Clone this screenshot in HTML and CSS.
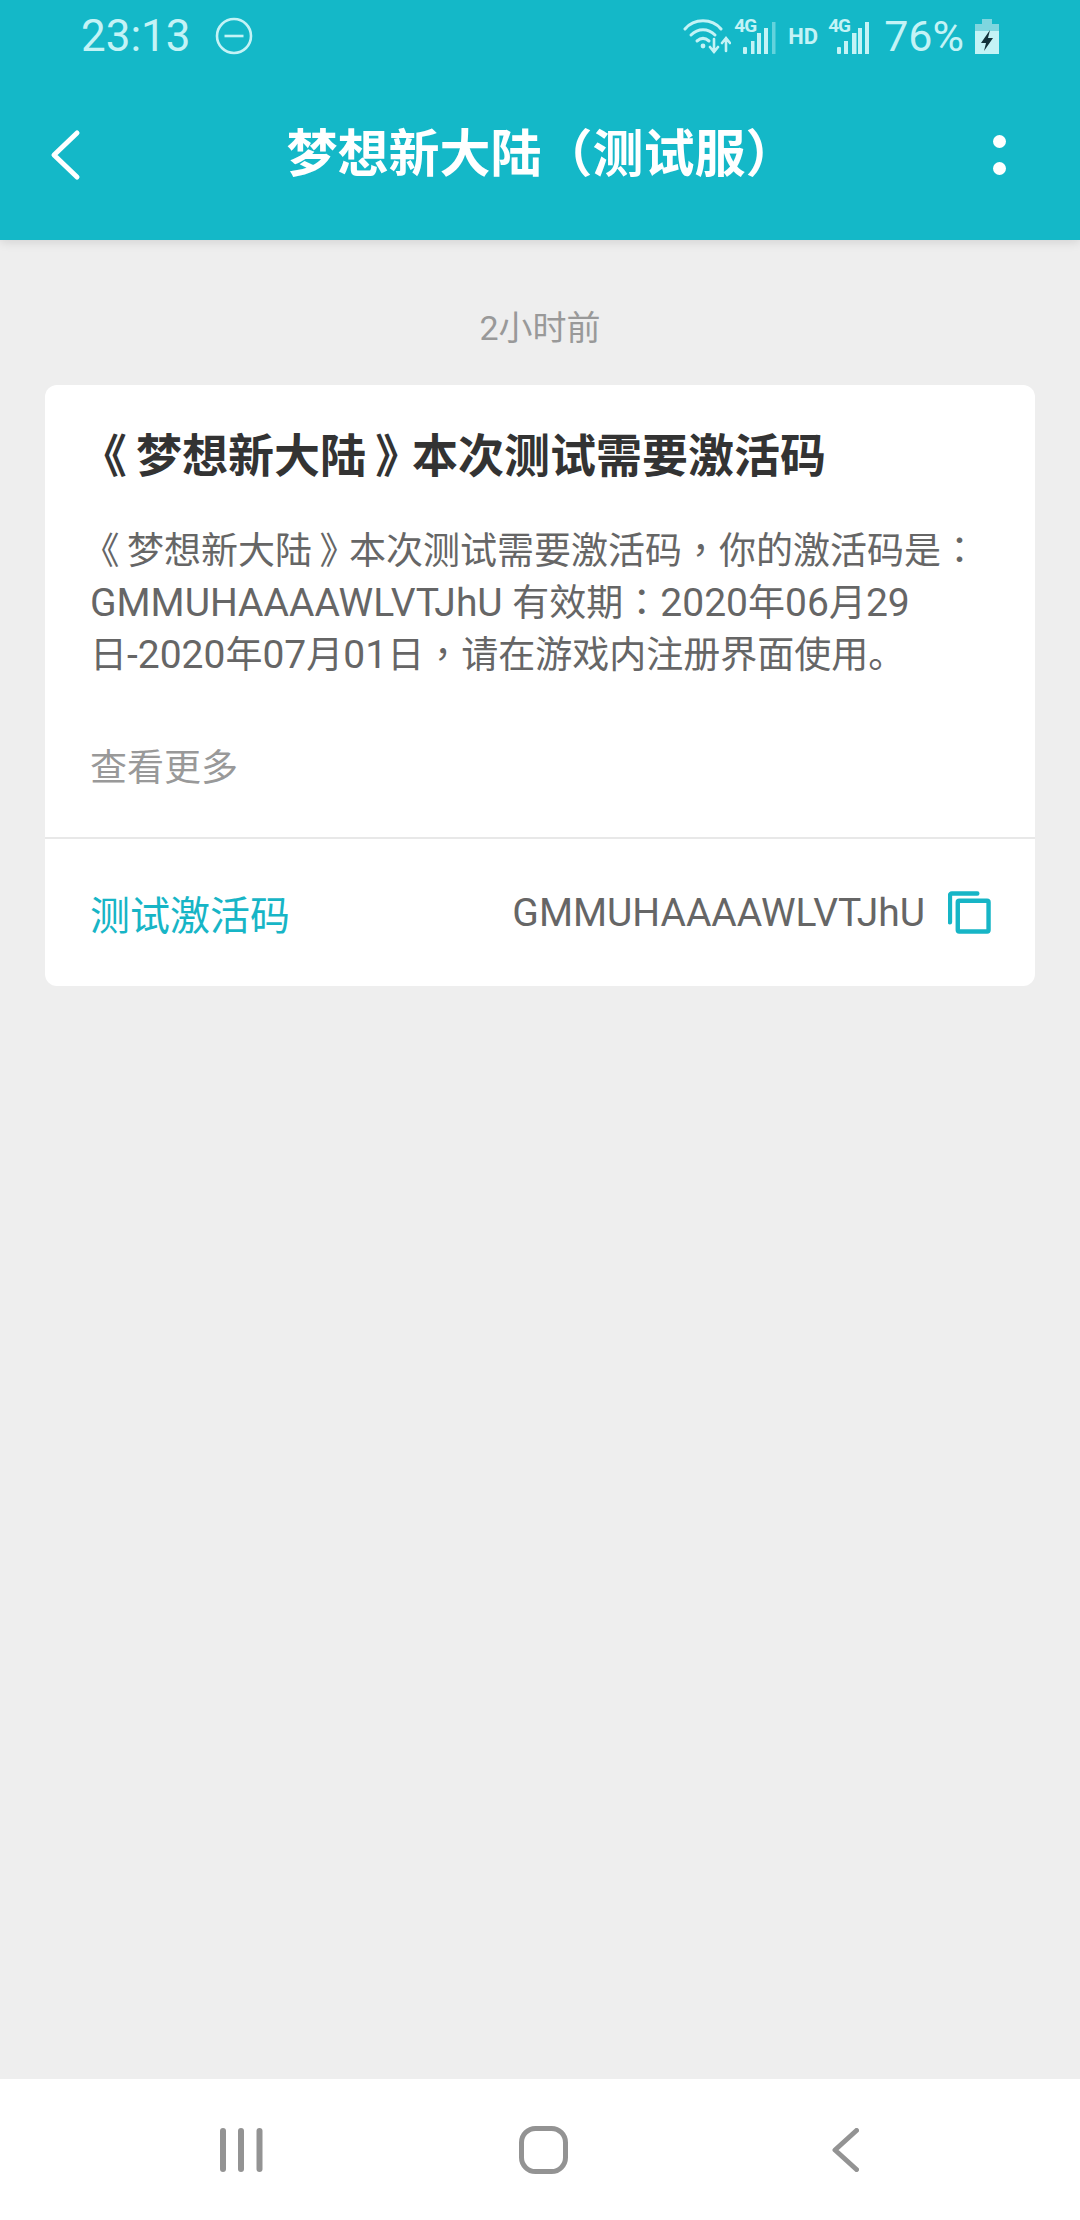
FILE: index.html
```html
<!DOCTYPE html>
<html lang="zh-CN">
<head>
<meta charset="utf-8">
<title>梦想新大陆（测试服）</title>
<link rel="stylesheet" href="styles.css">
</head>
<body>
<div class="screen">
  <header class="top">
    <div class="status">
      <div class="status-left">
        <span class="clock">23:13</span>
        <svg class="dnd" width="38" height="38" viewBox="0 0 38 38"><circle cx="19" cy="19" r="17" fill="none" stroke="#c4f3f6" stroke-width="2.6"/><path d="M9.5 19h19" stroke="#c4f3f6" stroke-width="2.6"/></svg>
      </div>
      <div class="status-right">
        <svg class="wifi" width="48" height="36" viewBox="0 0 48 36" fill="none" stroke="#c4f3f6" stroke-linecap="round"><path d="M2 11C11 0 29 0 38 11" stroke-width="3"/><path d="M8 17c7-7 17-7 24 0" stroke-width="3"/><path d="M14 23c4-3.500 8-3.500 12 0" stroke-width="3"/><circle cx="20" cy="28" r="2.400" fill="#c4f3f6" stroke="none"/><path d="M31 21v13M27 29l4 5 4-5M43 33V20M39 25l4-5 4 5" stroke-width="2.600"/></svg>
        <span class="sim">
          <span class="net">4G</span>
          <svg width="33" height="32" viewBox="0 0 33 32" fill="#c4f3f6"><rect x="0" y="25" width="4" height="7" rx="1"/><rect x="8" y="19" width="3.500" height="13"/><rect x="14" y="11" width="4" height="21"/><rect x="21" y="6" width="4" height="26"/><rect x="29" y="0" width="3.500" height="32" opacity=".45"/></svg>
        </span>
        <span class="hd">HD</span>
        <span class="sim">
          <span class="net">4G</span>
          <svg width="33" height="32" viewBox="0 0 33 32" fill="#c4f3f6"><rect x="0" y="25" width="4" height="7" rx="1"/><rect x="7" y="19" width="4" height="13"/><rect x="15" y="11" width="4.500" height="21"/><rect x="21" y="6" width="4" height="26"/><rect x="28" y="0" width="4" height="32"/></svg>
        </span>
        <span class="pct">76%</span>
        <svg class="batt" width="24" height="35" viewBox="0 0 24 35"><path d="M7 0h10v5h7v30H0V5h7z" fill="#c4f3f6"/><path d="M7 0h10v5h7v7H0V5h7z" fill="#7fd6df"/><path d="M15 11l-9 13h5l-2 8 9-13h-5z" fill="#12323a"/></svg>
      </div>
    </div>
    <div class="titlebar">
      <svg class="back" width="34" height="52" viewBox="0 0 34 52" fill="none"><path d="M29 4L6 26l23 22" stroke="#fff" stroke-width="5" stroke-linecap="round" stroke-linejoin="round"/></svg>
      <h1 class="title">梦想新大陆（测试服）</h1>
      <div class="more"><i class="dot"></i><i class="dot"></i></div>
    </div>
  </header>

  <main class="content">
    <p class="when">2小时前</p>
    <article class="card">
      <div class="card-body">
        <h2 class="card-title"><span class="punct open" lang="zh-TW">《</span>梦想新大陆<span class="punct close" lang="zh-TW">》</span>本次测试需要激活码</h2>
        <p class="card-text"><span class="punct open" lang="zh-TW">《</span>梦想新大陆<span class="punct close" lang="zh-TW">》</span>本次测试需要激活码<span class="punct" lang="zh-TW">，</span>你的激活码是<span class="punct" lang="zh-TW">：</span><br><span class="lat">GMMUHAAAAWLVTJhU </span>有效期<span class="punct" lang="zh-TW">：</span><span class="lat">2020</span>年<span class="lat">06</span>月<span class="lat">29</span><br>日<span class="lat">-2020</span>年<span class="lat">07</span>月<span class="lat">01</span>日<span class="punct" lang="zh-TW">，</span>请在游戏内注册界面使用。</p>
        <p class="card-more">查看更多</p>
      </div>
      <div class="code-row">
        <span class="code-label">测试激活码</span>
        <span class="code-value">GMMUHAAAAWLVTJhU</span>
        <svg class="copy" width="43" height="43" viewBox="0 0 44 44" fill="none" stroke="#17b5c6" stroke-width="4.500"><path d="M30 2.500H4a2 2 0 0 0-2 2V32" stroke-linecap="round"/><rect x="10" y="10" width="31.500" height="31.500" rx="1.500"/></svg>
      </div>
    </article>
  </main>

  <nav class="sysnav">
    <svg class="nav-recent" width="43" height="44" viewBox="0 0 43 44" fill="#939393"><rect x="0" y="0" width="6" height="44" rx="3"/><rect x="18" y="0" width="6" height="44" rx="3"/><rect x="36.500" y="0" width="6" height="44" rx="3"/></svg>
    <svg class="nav-home" width="49" height="48" viewBox="0 0 49 48" fill="none"><rect x="2.500" y="2.500" width="44" height="43" rx="14" stroke="#939393" stroke-width="5"/></svg>
    <svg class="nav-back" width="27" height="44" viewBox="0 0 27 44" fill="none"><path d="M24.500 2.500L3 22l21.500 19.500" stroke="#939393" stroke-width="5" stroke-linecap="round" stroke-linejoin="round"/></svg>
  </nav>
</div>
</body>
</html>
```
FILE: styles.css
```css
* { box-sizing: border-box; }
html, body { margin: 0; padding: 0; }
body {
  width: 1080px;
  height: 2220px;
  overflow: hidden;
  font-family: Roboto, "Noto Sans CJK SC", sans-serif;
  background: #eeeeee;
}
.screen { width: 1080px; height: 2220px; display: flex; flex-direction: column; }
.top {
  height: 240px;
  flex: none;
  background: #14b8c8;
  box-shadow: 0 2px 10px rgba(0, 0, 0, .12);
  position: relative;
  z-index: 1;
}
.status {
  height: 72px;
  padding: 0 81px 0 81px;
  display: flex;
  align-items: center;
  justify-content: space-between;
  color: #c4f3f6;
}
.status-left, .status-right { display: flex; align-items: center; }
.clock { font-size: 44px; font-weight: 400; line-height: 72px; }
.dnd { margin-left: 24px; }
.sim { position: relative; display: block; width: 42px; height: 36px; margin-left: 3px; align-self: center; }
.sim svg { position: absolute; right: 0; bottom: 0; }
.net {
  position: absolute;
  left: 0;
  top: 0;
  font-size: 19px;
  line-height: 16px;
  font-weight: 700;
  letter-spacing: -1px;
}
.hd { font-size: 22px; font-weight: 700; margin-left: 12px; margin-right: 7px; }
.pct { font-size: 43px; font-weight: 400; margin-left: 14px; line-height: 72px; }
.batt { margin-left: 11px; }
.titlebar {
  height: 168px;
  display: flex;
  align-items: center;
  padding: 0 74px 2px 48px;
}
.back { flex: none; }
.title {
  margin: 0;
  font-size: 51px;
  font-weight: 700;
  color: #fff;
  flex: 1;
  text-align: center;
  line-height: 60px;
  padding-left: 8px;
}
.more { display: flex; flex-direction: column; gap: 14px; flex: none; }
.dot { display: block; width: 13px; height: 13px; border-radius: 50%; background: #fff; }
.content { flex: 1; padding: 0 45px; }
.when {
  margin: 64px 0 0;
  font-size: 34px;
  line-height: 48px;
  color: #999;
  text-align: center;
}
.card {
  margin-top: 33px;
  background: #fff;
  border-radius: 12px;
  overflow: hidden;
}
.card-body { padding: 40px 45px 0; height: 454px; border-bottom: 2px solid #e8e8e8; }
.card-title {
  margin: 0;
  font-size: 46px;
  line-height: 62px;
  font-weight: 700;
  color: #333;
}
.card-text {
  margin: 39px 0 0;
  font-size: 37px;
  line-height: 52px;
  color: #666;
}
.lat { font-size: 39px; line-height: 1; }
.punct { font-family: Roboto, "Noto Sans CJK TC", sans-serif; }
.open { margin-left: -.2em; margin-right: .2em; }
.close { margin-left: .2em; letter-spacing: -.2em; }
.card-more {
  margin: 61px 0 0;
  font-size: 37px;
  line-height: 52px;
  color: #999;
}
.code-row {
  height: 147px;
  display: flex;
  align-items: center;
  padding: 0 44px 0 45px;
}
.code-label { font-size: 40px; color: #17b5c6; flex: 1; }
.code-value { font-size: 39px; color: #666; margin-right: 23px; }
.sysnav {
  height: 141px;
  flex: none;
  background: #fff;
  display: flex;
  align-items: center;
  padding: 0 0 0 220px;
}
.nav-home { margin-left: 256px; }
.nav-back { margin-left: 264px; }
```
